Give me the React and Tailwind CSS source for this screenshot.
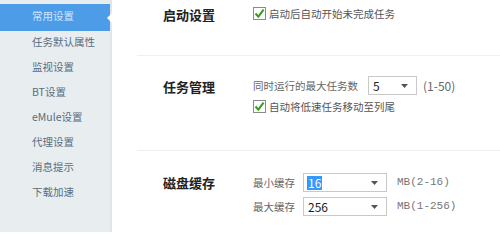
import React from 'react'

const navItems = ['常用设置', '任务默认属性', '监视设置', 'BT设置', 'eMule设置', '代理设置', '消息提示', '下载加速']

function Check({ label }) {
  return (
    <label className="flex items-center gap-[3px] text-[10.5px] text-[#555]">
      <span className="w-[13px] h-[13px] border border-[#8a8a8a] bg-white flex items-center justify-center">
        <svg width="11" height="11" viewBox="0 0 11 11">
          <path d="M1.5 5.5 L4.3 8.6 L9.6 1.6" fill="none" stroke="#3a9a1a" strokeWidth="2" />
        </svg>
      </span>
      <span>{label}</span>
    </label>
  )
}

function Select({ value, width, selected }) {
  return (
    <div className={`h-[19px] border border-[#c9c9c9] bg-white flex items-center justify-between pl-[3px] pr-[8px] ${width}`}>
      <span className={`text-[12px] leading-[14px] px-[1px] ${selected ? 'bg-[#3399ff] text-white' : 'text-[#222]'}`}>{value}</span>
      <svg width="7" height="4" viewBox="0 0 7 4"><path d="M0 0 H7 L3.5 4 Z" fill="#555" /></svg>
    </div>
  )
}

export default function App() {
  return (
    <div className="w-[500px] h-[243px] flex bg-white overflow-hidden" style={{ fontFamily: '"Noto Sans CJK SC", "Noto Sans", sans-serif' }}>
      {/* 侧边栏 */}
      <aside className="w-[112px] h-[232px] bg-[#e8edf0] border-r-2 border-[#dfe5e9] pt-[4px] shrink-0">
        {navItems.map((item, i) => (
          <div
            key={item}
            className={`relative flex items-center pl-[32px] pb-[4px] text-[10.5px] ${i === 0 ? 'h-[27px] bg-[#4d9ce8] text-[#cfe6ff]' : 'h-[25px] text-[#5a6d80]'}`}
          >
            {item}
            {i === 0 && (
              <span className="absolute right-[-2px] top-[9px] w-0 h-0 border-y-[5px] border-y-transparent border-r-[5px] border-r-white" />
            )}
          </div>
        ))}
      </aside>

      <main className="flex-1 pl-[25px]">
        {/* 启动设置 */}
        <section className="h-[56px] border-b border-[#f0f0f0] flex pt-[6px]">
          <h2 className="w-[90px] text-[13px] font-bold text-[#222] leading-[18px] pl-[26px] box-content">启动设置</h2>
          <div><Check label="启动后自动开始未完成任务" /></div>
        </section>

        {/* 任务管理 */}
        <section className="h-[95px] border-b border-[#f0f0f0] flex pt-[22px]">
          <h2 className="w-[90px] text-[13px] font-bold text-[#222] leading-[18px] pl-[26px] box-content">任务管理</h2>
          <div className="flex flex-col gap-[4px] -mt-[2px]">
            <div className="flex items-center text-[10.5px] text-[#666]">
              <span className="w-[115px] whitespace-nowrap">同时运行的最大任务数</span>
              <Select value="5" width="w-[49px]" />
              <span className="text-[12px] text-[#666] ml-[6px]">(1-50)</span>
            </div>
            <Check label="自动将低速任务移动至列尾" />
          </div>
        </section>

        {/* 磁盘缓存 */}
        <section className="flex pt-[22px]">
          <h2 className="w-[90px] text-[13px] font-bold text-[#222] leading-[18px] pl-[26px] box-content pt-[1px]">磁盘缓存</h2>
          <div className="flex flex-col gap-[5px]">
            {[['最小缓存', '16', 'MB(2-16)', true], ['最大缓存', '256', 'MB(1-256)', false]].map(([l, v, r, s]) => (
              <div key={l} className="flex items-center text-[10.5px] text-[#666]">
                <span className="w-[50px]">{l}</span>
                <Select value={v} width="w-[84px]" selected={s} />
                <span className="ml-[10px] text-[11px] text-[#777]" style={{ fontFamily: '"Liberation Mono", "Noto Sans CJK SC", monospace' }}>{r}</span>
              </div>
            ))}
          </div>
        </section>
      </main>
    </div>
  )
}
